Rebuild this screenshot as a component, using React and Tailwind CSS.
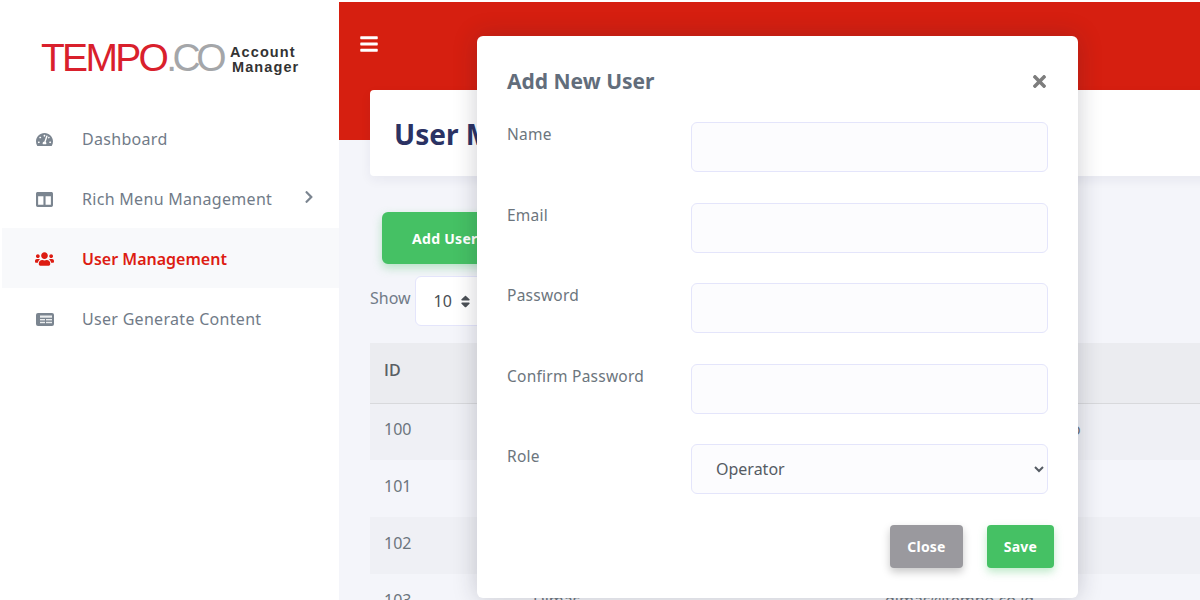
import React from 'react';
import { FaTachometerAlt, FaColumns, FaUsers, FaBars, FaSort, FaTimes, FaChevronRight } from 'react-icons/fa';

const font = { fontFamily: '"Noto Sans", sans-serif' };

// no package has this one, a table with a header band and a side column
const ContentIcon = ({ className }) => (
  <svg viewBox="0 0 18 13" className={className} fill="currentColor">
    <rect width="18" height="13" rx="2" />
    <rect x="4" y="2.5" width="12" height="2.2" fill="#ffffff" opacity="0.85" />
    <rect x="4" y="6" width="5" height="1.4" fill="#ffffff" opacity="0.85" />
    <rect x="10" y="6" width="6" height="1.4" fill="#ffffff" opacity="0.85" />
    <rect x="4" y="8.8" width="5" height="1.4" fill="#ffffff" opacity="0.85" />
    <rect x="10" y="8.8" width="6" height="1.4" fill="#ffffff" opacity="0.85" />
  </svg>
);

const menu = [
  { label: 'Dashboard', icon: FaTachometerAlt },
  { label: 'Rich Menu Management', icon: FaColumns, arrow: true },
  { label: 'User Management', icon: FaUsers, active: true },
  { label: 'User Generate Content', icon: ContentIcon },
];

const users = [
  { id: 100, name: 'Admin', email: 'administrators@tempo.co' },
  { id: 101, name: 'Operator', email: 'operator@tempo.co' },
  { id: 102, name: 'Budi', email: 'budi@tempo.co' },
  { id: 103, name: 'Dimas', email: 'dimas@tempo.co.id' },
];

const fields = ['Name', 'Email', 'Password', 'Confirm Password'];

const Sidebar = () => (
  <aside className="w-[339px] shrink-0 bg-white pl-[2px]">
    <div className="flex h-[108px] items-start pl-[39px] pt-[36px]">
      <span className="font-['Liberation_Sans'] text-[39px] leading-[44px] tracking-[-2.7px] text-[#d9202c]">
        TEMPO<span className="tracking-[-4.5px] text-[#a4a6a9]">.CO</span>
      </span>
      <span className="ml-[8px] mt-[9px] font-['Liberation_Sans'] text-[14.5px] font-bold leading-[14.5px] tracking-[1.1px] text-[#333333]">
        Account
        <br />
        <span className="ml-[2px]">Manager</span>
      </span>
    </div>
    {menu.map(({ label, icon: Icon, arrow, active }) => (
      <div
        key={label}
        className={`flex h-[60px] items-center pl-[33px] pr-[23px] pt-[2px] text-[16px] ${active ? 'bg-[#f8f9fb] font-semibold text-[#dd1c12]' : 'tracking-[0.3px] text-[#717b88]'}`}
      >
        <span className="flex w-[19px] justify-center">
          <Icon className={label === 'User Generate Content' ? 'h-[13px] w-[18px] text-[#7b8590]' : active ? 'text-[20px]' : 'text-[17px] text-[#7b8590]'} />
        </span>
        <span className="ml-[28px] flex-1">{label}</span>
        {arrow && <FaChevronRight className="mb-[4px] text-[14px] text-[#7b8590]" />}
      </div>
    ))}
  </aside>
);

const UserTable = () => (
  <table className="w-[880px] table-fixed border-collapse text-left text-[16px] text-[#6c757d]">
    <thead>
      <tr className="h-[60px] border-b border-[#d8d9dc] bg-[#ebecf0] text-[#5a5f65]">
        <th className="w-[149px] pb-[5px] pl-[14px] font-['Open_Sans'] font-semibold">ID</th>
        <th className="w-[352px] pl-[14px] font-semibold">Name</th>
        <th className="pl-[14px] font-semibold">Email</th>
      </tr>
    </thead>
    <tbody>
      {users.map((u, i) => (
        <tr key={u.id} className={`h-[57px] ${i % 2 === 0 ? 'bg-[#eff0f5]' : ''}`}>
          <td className="pb-[5px] pl-[14px]">{u.id}</td>
          <td className="pb-[5px] pl-[14px]">{u.name}</td>
          <td className="pb-[5px] pl-[14px]">{u.email}</td>
        </tr>
      ))}
    </tbody>
  </table>
);

const Content = () => (
  <main className="flex min-w-0 flex-1 flex-col overflow-hidden bg-[#f4f5fa] shadow-[inset_0_2px_0_#ffffff]">
    <header className="mt-[2px] h-[138px] shrink-0 bg-[#d61f10] pl-[20px] pt-[32px] text-white">
      <FaBars className="text-[20px]" />
    </header>
    <div className="-mt-[50px] pl-[31px]">
      <div className="flex h-[86px] w-[900px] items-center rounded-[4px] bg-white pl-[24px] pt-[2px] shadow-[0_4px_12px_rgba(30,40,80,0.06)]">
        <h1 className="text-[28px] font-bold text-[#2b3263]">User Management</h1>
      </div>
      <button className="ml-[12px] mt-[36px] flex h-[52px] w-[130px] items-center rounded-[6px] bg-[#45c164] pl-[30px] text-[14px] font-bold tracking-[0.3px] text-white shadow-[0_4px_10px_rgba(69,193,100,0.35)]">
        Add User
      </button>
      <div className="mt-[12px] flex items-start text-[16px] text-[#717b88]">
        <span className="mt-[10px]">Show</span>
        <div className="ml-[4px] flex h-[50px] w-[90px] items-center rounded-[6px] border border-[#e4e5fb] bg-white pl-[18px] text-[#4a4f55]">
          10
          <FaSort className="ml-[6px] text-[15px]" />
        </div>
      </div>
      <div className="mt-[17px]">
        <UserTable />
      </div>
    </div>
  </main>
);

const AddUserModal = () => (
  <div className="absolute left-[477px] top-[36px] h-[562px] w-[601px] rounded-[6px] bg-white pl-[30px] pr-[24px] shadow-[0_0_24px_rgba(30,30,50,0.22)]">
    <div className="flex h-[86px] items-start justify-between pr-[5px] pt-[31px]">
      <h2 className="text-[21px] font-bold leading-[28px] text-[#626d7b]">Add New User</h2>
      <FaTimes className="mt-[5px] text-[19px] text-[#7d7d7d]" />
    </div>
    <div className="flex flex-col gap-[30.5px] pr-[6px]">
      {fields.map((f) => (
        <div key={f} className="flex items-start">
          <label className="w-[184px] shrink-0 text-[15.5px] leading-[24px] tracking-[0.25px] text-[#6c757d]">{f}</label>
          <input className="h-[50px] flex-1 rounded-[6px] border border-[#e4e5fb] bg-[#fcfcfe]" />
        </div>
      ))}
      <div className="flex items-start">
        <label className="w-[184px] shrink-0 text-[15.5px] leading-[24px] tracking-[0.25px] text-[#6c757d]">Role</label>
        <select className="h-[50px] flex-1 rounded-[6px] border border-[#e4e5fb] bg-[#fcfcfe] pl-[20px] text-[16px] text-[#555b63]" defaultValue="Operator">
          <option>Operator</option>
          <option>Admin</option>
        </select>
      </div>
    </div>
    <div className="mt-[31px] flex justify-end gap-[24px]">
      <button className="h-[43px] w-[73px] rounded-[4px] bg-[#9a999e] pb-[1px] text-[14px] font-bold tracking-[0.2px] text-white shadow-[0_4px_8px_rgba(0,0,0,0.22)]">
        Close
      </button>
      <button className="h-[43px] w-[67px] rounded-[4px] bg-[#45c164] pb-[1px] text-[14px] font-bold tracking-[0.2px] text-white shadow-[0_4px_8px_rgba(69,193,100,0.35)]">
        Save
      </button>
    </div>
  </div>
);

export default function App() {
  return (
    <div className="relative flex h-[600px] w-[1200px] overflow-hidden bg-white" style={font}>
      <Sidebar />
      <Content />
      <AddUserModal />
    </div>
  );
}
